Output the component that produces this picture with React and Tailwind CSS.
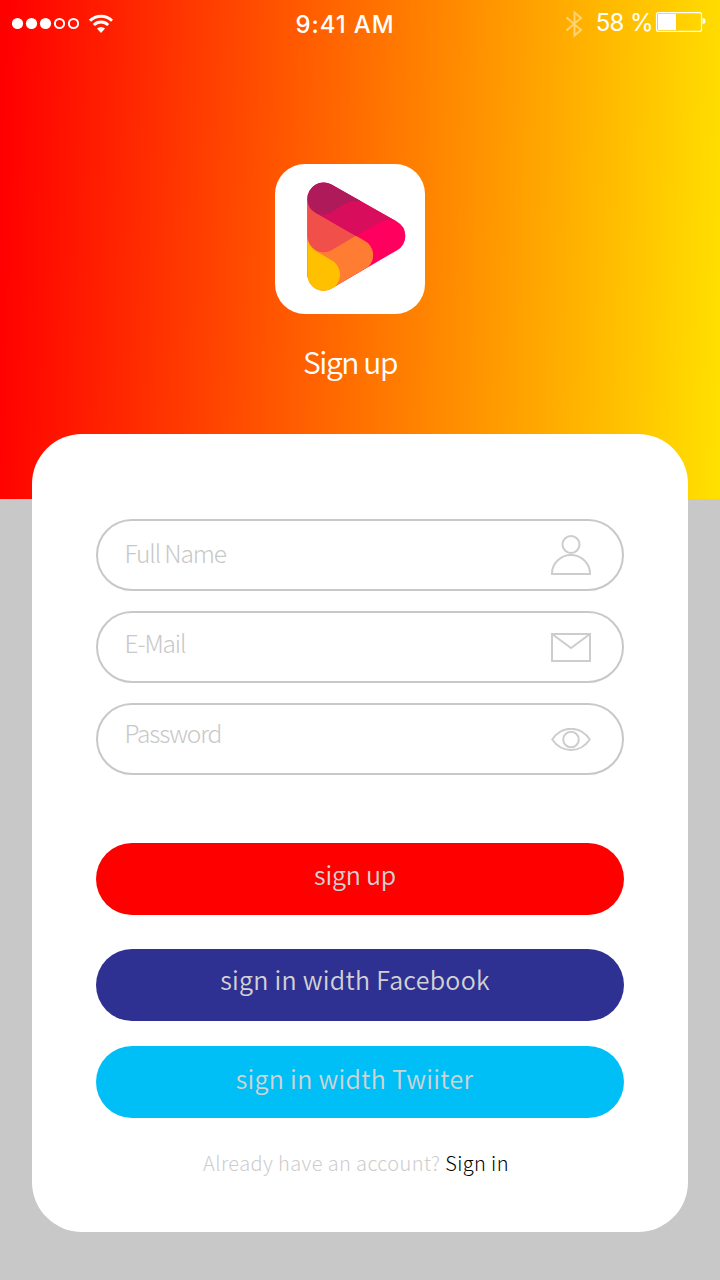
const cjk = "font-['Noto_Sans_CJK_SC',sans-serif]";

function StatusBar() {
  return (
    <div className="flex h-12 items-start justify-between pl-3 pr-[14px] font-['Inter',sans-serif] text-white">
      <div className="flex h-12 w-[266px] items-center">
        <svg className="h-12 w-[104px]" viewBox="12 0 104 48" fill="none" stroke="#fff" strokeWidth="2">
          <g fill="#fff" stroke="none">
            <circle cx="17.5" cy="23.5" r="5.6" />
            <circle cx="31.5" cy="23.5" r="5.6" />
            <circle cx="45.5" cy="23.5" r="5.6" />
          </g>
          <circle cx="59.5" cy="23.5" r="4.6" />
          <circle cx="73.5" cy="23.5" r="4.6" />
          <path d="M90 20.7a15.6 15.6 0 0 1 22 0" strokeWidth="3" />
          <path d="M93.8 25a10.2 10.2 0 0 1 14.4 0" strokeWidth="2.900" />
          <path d="M97 28.600a5.7 5.7 0 0 1 8 0L101 33z" fill="#fff" stroke="none" />
        </svg>
      </div>
      <div className="pt-[9px] text-2xl leading-8 font-[450] tracking-[0.9px] whitespace-nowrap">9:41 AM</div>
      <div className="flex h-12 w-[294px] items-start justify-end">
        <svg className="mr-[13px] h-12 w-[18px]" viewBox="565 0 18 48" fill="none" stroke="#fff" strokeOpacity="0.45" strokeWidth="2">
          <path d="M566.5 17.5L581 30L574.5 35.5V12.5L581 18L566.5 30.5" />
        </svg>
        <span className="pt-[7px] text-2xl leading-8 font-normal tracking-[-0.6px] whitespace-nowrap">58 %</span>
        <svg className="ml-0.5 h-12 w-[51px]" viewBox="655 0 51 48" fill="none">
          <rect x="656.5" y="12.6" width="45" height="18.8" rx="2" stroke="#fff" strokeWidth="1.2" />
          <path d="M658 14h18v16h-18z" fill="#fff" />
          <path d="M702.5 18a3 3 0 0 1 0 6z" fill="#fff" />
        </svg>
      </div>
    </div>
  );
}

function Logo() {
  return (
    <svg className="h-[150px] w-[150px] rounded-[30px] bg-white" viewBox="30 27 450 450">
      <path fill="#ff005f" d="M127 131A49 49 0 0 1 199.500 88.500L396.500 200.500A49 49 0 0 1 396.500 285.500L199.500 400.500A49 49 0 0 1 127 358z" />
      <path fill="#ff7d33" d="M127 131L151 173L297.500 256.500A49 49 0 0 1 310 335L297.500 343L199.500 400.500A49 49 0 0 1 127 358z" />
      <path fill="#f1504a" d="M127 131L151 173L272 243L199.500 285.500A49 49 0 0 1 127 243z" />
      <path fill="#d80e5c" d="M151 173L272 243L340 206C358 195 377 191 396.500 200.500L270 129z" />
      <path fill="#ae1a5a" d="M127 131A49 49 0 0 1 199.500 88.500L288 139C270 136 252 139 236 148L199.500 171C184 181 167 182 151 173.500A49 49 0 0 1 127 131z" />
      <path fill="#ffc000" d="M127 250Q131 274 151 287L199.500 315.500A49 49 0 1 1 127 358z" />
    </svg>
  );
}

function UserIcon() {
  return (
    <svg className="h-10 w-10" viewBox="0 0 40 40" fill="none" stroke="#cdcdcd" strokeWidth="2">
      <circle cx="20" cy="9.500" r="8.500" />
      <path d="M1 39v-.5a19 18.500 0 0 1 38 0v.5z" />
    </svg>
  );
}

function MailIcon() {
  return (
    <svg className="h-[30px] w-10" viewBox="0 0 40 30" fill="none" stroke="#cdcdcd" strokeWidth="2">
      <path d="M1 2h38v27H1zM1 2l19 14l19-14" />
    </svg>
  );
}

function EyeIcon() {
  return (
    <svg className="mt-px h-6 w-10" viewBox="0 0 40 24" fill="none" stroke="#cdcdcd" strokeWidth="2">
      <path d="M1.200 11.500C11-2.800 29-2.800 38.800 11.500C29 25.500 11 25.500 1.200 11.500z" />
      <circle cx="20" cy="11.500" r="7.800" />
    </svg>
  );
}

function Field({ label, labelClass, children }) {
  return (
    <div className="flex h-18 items-center justify-between rounded-full border-2 border-[#c8c8c8] pr-[31px] pl-[26.5px]">
      <span className={`${cjk} text-[24.5px] leading-8 font-light tracking-[-1.15px] whitespace-nowrap text-[#c8c8c8] ${labelClass}`}>{label}</span>
      {children}
    </div>
  );
}

function Button({ className, textClass, children }) {
  return (
    <button className={`flex h-18 w-full items-center justify-center rounded-full pr-2.5 ${className}`}>
      <span className={`${cjk} text-[25px] leading-8 font-[350] whitespace-nowrap text-[#d2d2d2] ${textClass}`}>{children}</span>
    </button>
  );
}

export default function App() {
  return (
    <div className="h-[1280px] w-[720px] overflow-hidden bg-[#c8c8c8]">
      <header className="flex h-[499px] flex-col bg-[linear-gradient(92deg,#ff0000_1%,#ffe100_100%)]">
        <StatusBar />
        <div className="flex flex-col items-center pt-[116px] pr-5">
          <Logo />
          <h1 className={`${cjk} mt-[27px] text-[30px] leading-10 font-[350] tracking-[-1.4px] whitespace-nowrap text-white`}>Sign up</h1>
        </div>
      </header>
      <main className="mx-8 -mt-[65px] h-[798px] rounded-[50px] bg-white px-16 pt-[85px]">
        <div className="flex flex-col gap-5">
          <Field label="Full Name" labelClass="-mt-1"><UserIcon /></Field>
          <Field label="E-Mail" labelClass="-mt-2"><MailIcon /></Field>
          <Field label="Password" labelClass="-mt-3"><EyeIcon /></Field>
        </div>
        <div className="pt-17">
          <Button className="bg-[#ff0000]" textClass="-mt-2.5 tracking-[-0.2px]">sign up</Button>
          <Button className="mt-[34px] bg-[#2e3192]" textClass="-mt-3 tracking-[0.27px]">sign in width Facebook</Button>
          <Button className="mt-[25px] bg-[#00bff6]" textClass="-mt-2 pr-[1px] tracking-[0.3px]">sign in width Twiiter</Button>
        </div>
        <p className={`${cjk} mt-[31px] pr-2 text-center text-[20px] leading-7 font-light tracking-[0.4px] whitespace-nowrap text-[#cdcdcd]`}>
          Already have an account? <a className="text-black">Sign in</a>
        </p>
      </main>
    </div>
  );
}
